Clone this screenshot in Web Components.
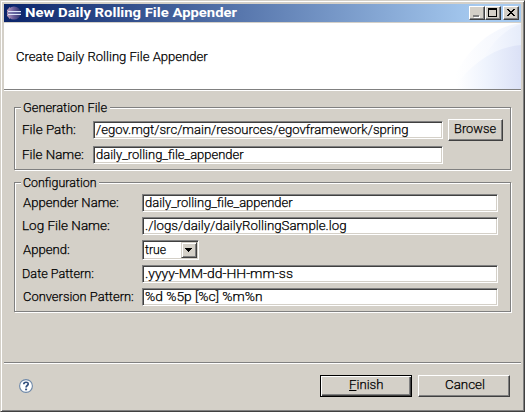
<!DOCTYPE html>
<html lang="en">
<head>
<meta charset="utf-8">
<title>New Daily Rolling File Appender</title>
<style>
html,body{margin:0;padding:0;overflow:hidden;background:#d4d0c8}
body{font:300 13.7px Roboto,"Noto Sans CJK KR",sans-serif;color:#000;-webkit-text-stroke:.25px}
</style>
</head>
<body>
<app-window>
  <title-bar slot="title"><fit-text w="212">New Daily Rolling File Appender</fit-text></title-bar>
  <page-banner slot="banner"><fit-text w="192">Create Daily Rolling File Appender</fit-text></page-banner>
  <group-box style="margin-top:16px;height:64px" legend="Generation File" lw="84">
    <form-row label="File Path:" w="52" col="71" style="margin-top:12px;height:22px">
      <text-field style="width:350px"><fit-text w="312">/egov.mgt/src/main/resources/egovframework/spring</fit-text></text-field>
      <push-button style="width:55px;margin-left:5px;"><fit-text w="41">Browse</fit-text></push-button>
    </form-row>
    <form-row label="File Name:" w="60" col="71" style="margin-top:5px;height:18px">
      <text-field style="width:350px"><fit-text w="148">daily_rolling_file_appender</fit-text></text-field>
    </form-row>
  </group-box>
  <group-box style="margin-top:11px;height:131px" legend="Configuration" lw="73">
    <form-row label="Appender Name:" w="95" style="margin-top:12px;height:18px">
      <text-field style="width:356px"><fit-text w="148">daily_rolling_file_appender</fit-text></text-field>
    </form-row>
    <form-row label="Log File Name:" w="86" style="margin-top:5px;height:18px">
      <text-field style="width:356px"><fit-text w="201">./logs/daily/dailyRollingSample.log</fit-text></text-field>
    </form-row>
    <form-row label="Append:" w="46" style="margin-top:5px;height:20px">
      <combo-box><fit-text w="21">true</fit-text></combo-box>
    </form-row>
    <form-row label="Date Pattern:" w="70" style="margin-top:5px;height:18px">
      <text-field style="width:356px"><fit-text w="148">.yyyy-MM-dd-HH-mm-ss</fit-text></text-field>
    </form-row>
    <form-row label="Conversion Pattern:" w="110" style="margin-top:5px;height:18px">
      <text-field style="width:356px"><fit-text w="117">%d %5p [%c] %m%n</fit-text></text-field>
    </form-row>
  </group-box>
  <help-icon slot="footer"></help-icon>
  <push-button slot="footer" default style="width:92px;margin-left:auto"><fit-text w="33"><u>F</u>inish</fit-text></push-button>
  <push-button slot="footer" style="width:92px;margin:0 11px 0 6px"><fit-text w="39">Cancel</fit-text></push-button>
</app-window>
<script>
const define = (name, html, init) => customElements.define(name, class extends HTMLElement {
  constructor() {
    super();
    this.attachShadow({ mode: 'open' }).innerHTML = html;
  }
  connectedCallback() { if (init) init(this, this.shadowRoot); }
});

define('app-window', `<style>
  :host{display:flex;flex-direction:column;box-sizing:border-box;width:525px;height:412px;padding:3px 2px 0 3px;
    background:#d4d0c8;border:1px solid;border-color:#d4d0c8 #404040 #404040 #d4d0c8;
    box-shadow:inset 1px 1px #fff,inset -1px -1px #808080}
  .body{height:271px;padding:0 9px 0 10px;box-sizing:border-box}
  .foot{display:flex;width:517px;border-top:1px solid #808080;box-shadow:inset 0 1px #fff;height:35px;padding-top:12px;box-sizing:border-box}
</style><slot name="title"></slot><slot name="banner"></slot>
<div class="body"><slot></slot></div><div class="foot"><slot name="footer"></slot></div>`);

define('title-bar', `<style>
  :host{display:flex;width:517px;height:18px;margin-bottom:1px;box-sizing:border-box;padding:0 2px 0 3px;
    background:linear-gradient(90deg,#0a246a,#a6caf0 92%);color:#fff;font-weight:700;font-size:13.5px;-webkit-text-stroke:0}
  .logo{width:14px;height:14px;margin:2px 4px 0 0}
  .b{width:16px;height:14px;margin-top:2px;box-sizing:border-box;background:#d4d0c8;border:1px solid;border-color:#fff #404040 #404040 #fff;
    box-shadow:inset -1px -1px #808080;display:block}
  .b:nth-of-type(2){margin-left:auto}.x{margin-left:2px}
</style>
<svg class="logo" viewBox="0 0 14 14"><defs><linearGradient id="g"><stop offset="0" stop-color="#b79ac0"/><stop offset=".5" stop-color="#665b98"/><stop offset="1" stop-color="#30346e"/></linearGradient></defs>
<circle cx="7" cy="7" r="6.6" fill="url(#g)"/><path d="M3 1.5A6.6 6.6 0 0 0 3 12.5" fill="none" stroke="#d5a9ba" stroke-width="1"/><path d="M1 5.5h13M1 8.5h13" stroke="#dce4f8"/><path d="M1 7h13" stroke="#6470a8"/></svg>
<slot></slot>
<svg class="b" viewBox="0 0 14 12" shape-rendering="crispEdges"><path d="M4 9h6v2H4z" fill="#fff"/><path d="M3 8h6v2H3z" fill="#808080"/></svg>
<svg class="b" viewBox="0 0 14 12" shape-rendering="crispEdges"><path d="M2 1h9v9H2zM3 3v6h7V3z" fill-rule="evenodd"/></svg>
<svg class="b x" viewBox="0 0 14 12" shape-rendering="crispEdges"><path d="M3 2h2v1h1v1h2V3h1V2h2v1h-1v1H9v1H8v1h1v1h1v1h1v1H9V8H8V7H6v1H5v1H3V8h1V7h1V6h1V5H5V4H4V3H3z"/></svg>`);

define('page-banner', `<style>
  :host{display:flex;width:517px;height:68px;box-sizing:border-box;background:#fff;border-bottom:1px solid #fff;
    box-shadow:inset 0 -1px #808080;padding:25px 0 0 12px;justify-content:space-between}
  svg{width:76px;height:66px;margin-top:-25px;display:block}
</style><slot></slot>
<svg viewBox="0 0 76 66"><defs>
<linearGradient id="a"><stop offset=".1" stop-color="#fff"/><stop offset="1" stop-color="#f0f4fd"/></linearGradient>
<linearGradient id="b"><stop offset="0" stop-color="#f9fbff"/><stop offset="1" stop-color="#e6ecfa"/></linearGradient>
<linearGradient id="c"><stop offset=".05" stop-color="#fff"/><stop offset=".5" stop-color="#eef3fd"/><stop offset="1" stop-color="#dbe1f6"/></linearGradient></defs>
<path d="M3 66C18 31 43 4 76 0V66z" fill="url(#a)"/>
<path d="M76 1C60 6 48 19 37 37L45 40H76z" fill="url(#b)"/>
<path d="M8 66C26 40 50 24 76 22V66z" fill="url(#c)"/></svg>`);

define('group-box', `<style>
  :host{display:block;box-sizing:border-box;width:498px;position:relative}
  .frame{position:absolute;inset:0 1px 1px 0;border:1px solid #808080;box-shadow:1px 1px #fff,inset 1px 1px #fff}
  .legend{position:absolute;left:7px;top:-8px;height:16px;background:#d4d0c8;padding:0 3px 0 2px}
  .in{position:relative;display:flow-root;padding-left:8px}
</style><div class="frame"></div><div class="legend"></div><div class="in"><slot></slot></div>`, (el, root) => {
  root.querySelector('.legend').innerHTML = `<fit-text w="${el.getAttribute('lw')}">${el.getAttribute('legend')}</fit-text>`;
});
define('form-row', `<style>
  :host{display:flex;align-items:center}
  .l{flex:none;height:18px;box-sizing:border-box;padding-left:1px}
</style><div class="l"></div><slot></slot>`, (el, root) => {
  const l = root.querySelector('.l');
  l.style.width = (el.getAttribute('col') || 120) + 'px';
  l.innerHTML = `<fit-text w="${el.getAttribute('w')}">${el.getAttribute('label')}</fit-text>`;
});

const sunken = `box-sizing:border-box;background:#fff;border:1px solid;border-color:#808080 #fff #fff #808080;box-shadow:inset 1px 1px #404040,inset -1px -1px #d4d0c8`;
define('text-field', `<style>:host{display:block;height:18px;padding:0 0 0 2px;${sunken}}::slotted(fit-text){margin-top:-1px}</style><slot></slot>`);
define('combo-box', `<style>
  :host{display:flex;width:57px;height:20px;padding:1px 1px 1px 2px;${sunken}}
  ::slotted(fit-text){margin-top:-1px}
  svg{margin-left:auto;width:16px;height:16px;box-sizing:border-box;background:#d4d0c8;border:1px solid;border-color:#d4d0c8 #404040 #404040 #d4d0c8;box-shadow:inset 1px 1px #fff,inset -1px -1px #808080}
</style><slot></slot><svg viewBox="0 0 14 14" shape-rendering="crispEdges"><path d="M3 5h7v1H9v1H8v1H7v1H6V8H5V7H4V6H3z"/></svg>`);
define('push-button', `<style>
  :host{display:flex;height:22px;flex:none;box-sizing:border-box;justify-content:center;border:1px solid;border-color:#fff #404040 #404040 #fff;box-shadow:inset -1px -1px #808080}
  :host([default]){border-color:#000;box-shadow:inset 1px 1px #fff,inset -1px -1px #404040,inset -2px -2px #808080}
</style><slot></slot>`);
define('help-icon', `<style>:host{display:block;width:14px;height:14px;margin:4px 0 0 15px}svg{display:block}</style>
<svg width="14" height="14" viewBox="0 0 14 14"><circle cx="7" cy="7" r="6.4" fill="#fff" stroke="#6d87a8" stroke-width="1.1"/>
<path d="M4.8 5.2C4.8 2.6 9.4 2.6 9.2 5.1C9.1 6.6 7.1 6.5 7.1 8.5" fill="none" stroke="#34517f" stroke-width="1.7"/><path d="M6.1 9.6h2v1.7h-2z" fill="#34517f"/></svg>`);

// Single-line text whose ink spans exactly w pixels from its left edge.
// Registered last, so that the font it measures is the one its host passes down.
const ctx = document.createElement('canvas').getContext('2d');
define('fit-text', `<style>
  :host{display:block;height:16px;line-height:16px;white-space:pre;flex:none}
  span{display:inline-block;transform-origin:0 0}
</style><span><slot></slot></span>`, (el, root) => {
  const cs = getComputedStyle(el);
  ctx.font = `${cs.fontWeight} ${cs.fontSize} Roboto`;
  const m = ctx.measureText(el.textContent);
  const w = +el.getAttribute('w');
  const k = w / (m.actualBoundingBoxLeft + m.actualBoundingBoxRight);
  root.querySelector('span').style.transform = `translateX(${m.actualBoundingBoxLeft * k}px) scaleX(${k})`;
  el.style.width = w + 'px';
});
</script>
</body>
</html>
